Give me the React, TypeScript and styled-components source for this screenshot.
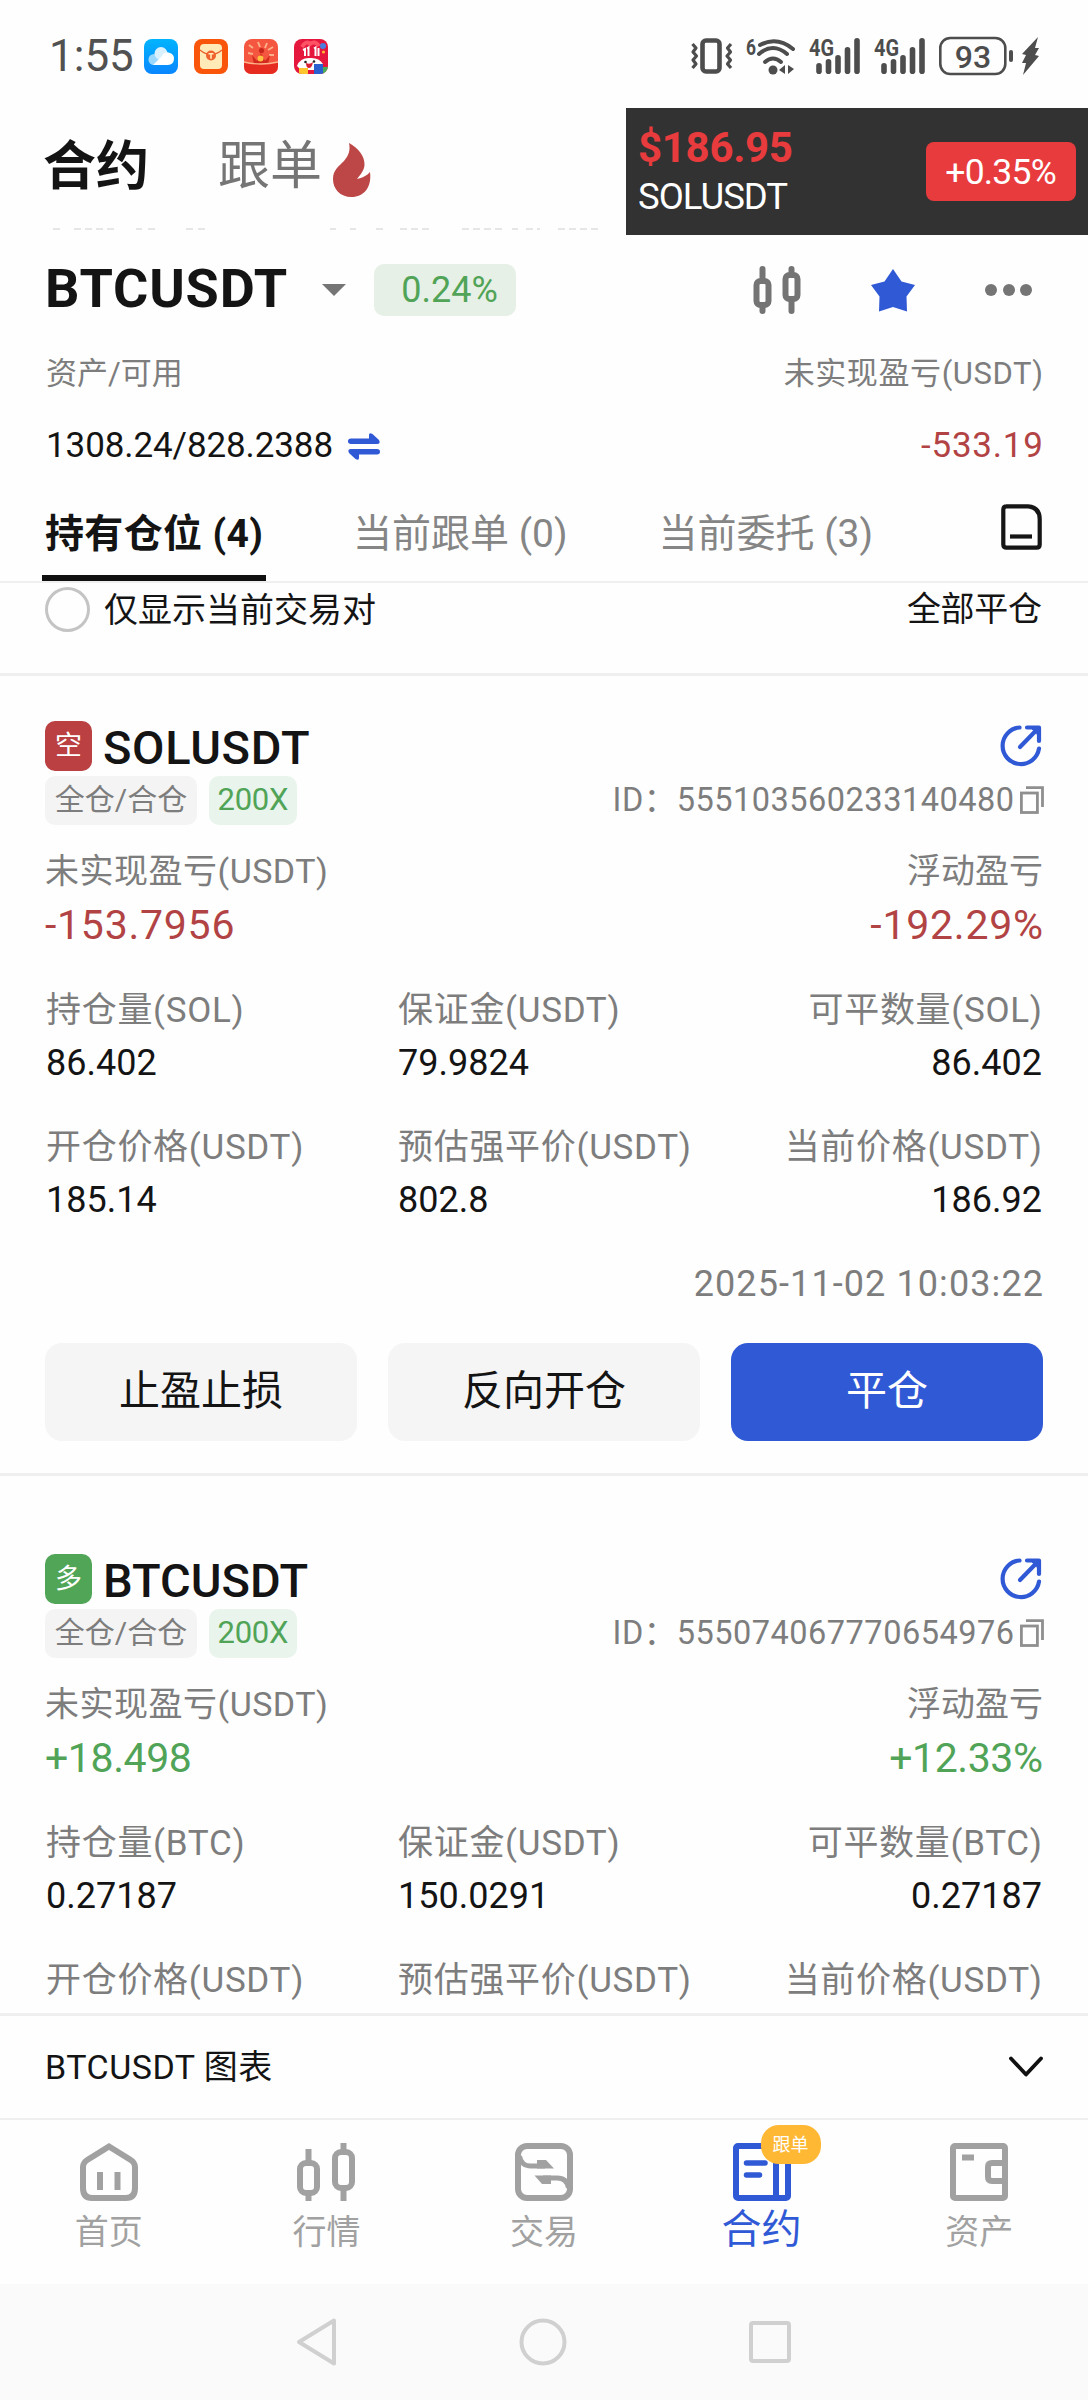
import React from "react";
import styled, { createGlobalStyle } from "styled-components";

const C = {
  ink: "#141414",
  gray: "#7d7d7d",
  navGray: "#a1a1a1",
  blue: "#3059d6",
  red: "#b24344",
  green: "#51a457",
  line: "#efefef",
};

const GlobalStyle = createGlobalStyle`
  * { box-sizing: border-box; }
  body { margin: 0; background: #fefefe; }
  svg { display: block; overflow: visible; flex: none; }
`;

const Screen = styled.div`
  width: 1088px;
  height: 2400px;
  overflow: hidden;
  display: flex;
  flex-direction: column;
  background: #fefefe;
  color: ${C.ink};
  font-family: Roboto, "Noto Sans CJK SC", sans-serif;
`;

type TextProps = {
  $size: number;
  $lh?: number;
  $color?: string;
  $weight?: number;
  $ls?: number;
};

const Text = styled.span<TextProps>`
  display: block;
  white-space: nowrap;
  font-size: ${(p) => p.$size}px;
  line-height: ${(p) => p.$lh ?? 40}px;
  color: ${(p) => p.$color ?? C.ink};
  font-weight: ${(p) => p.$weight ?? 400};
  letter-spacing: ${(p) => p.$ls ?? 0}px;
  margin-right: ${(p) => -(p.$ls ?? 0)}px;
`;

/* ---------- status bar ---------- */

const StatusBar = styled.div`
  height: 108px;
  flex: none;
  padding: 4px 49px 0 49px;
  display: flex;
  align-items: center;
  justify-content: space-between;
`;

const AppIcons = styled.div`
  display: flex;
  align-items: center;
  gap: 16px;
  margin-left: 10px;
`;

const Group = styled.div<{ $gap?: number }>`
  display: flex;
  align-items: center;
  gap: ${(p) => p.$gap ?? 0}px;
`;

const CloudApp = () => (
  <svg width="34" height="35" viewBox="0 0 34 35">
    <defs>
      <linearGradient id="cl" x1="0" y1="0" x2="0" y2="1">
        <stop offset="0" stopColor="#00b4ff" />
        <stop offset="1" stopColor="#0a86ff" />
      </linearGradient>
    </defs>
    <rect width="34" height="35" rx="8" fill="url(#cl)" />
    <circle cx="10" cy="20.5" r="5.5" fill="#9bd8ff" />
    <circle cx="17" cy="14.5" r="6.5" fill="#d9f1ff" />
    <path d="M9 26 L18 17 A6.3 6.3 0 1 1 24 26 Z" fill="#fff" />
  </svg>
);

const EnvelopeApp = () => (
  <svg width="34" height="35" viewBox="0 0 34 35">
    <rect width="34" height="35" rx="8" fill="#f9560b" />
    <rect x="6" y="5" width="22" height="25" rx="4" fill="#ffeab8" />
    <path d="M6 11 Q17 20 28 11" fill="none" stroke="#e8602a" strokeWidth="1.4" />
    <circle cx="17" cy="16.5" r="5" fill="#f0622d" />
    <path d="M14.5 14.8h5M17 14.8v5" stroke="#ffeab8" strokeWidth="1.6" />
  </svg>
);

const GiftApp = () => (
  <svg width="34" height="35" viewBox="0 0 34 35">
    <rect width="34" height="35" rx="8" fill="#f4563f" />
    <path d="M5 6l4 3M14 3l2 5M23 4l-2 5M29 8l-5 3M4 14l5 1M30 16l-5 0" stroke="#fcb089" strokeWidth="2" />
    <path d="M8 16l5 6 4-8 4 8 5-6-2 9H10z" fill="#d3281e" />
    <circle cx="17.5" cy="11.5" r="2.6" fill="#c9261c" />
    <circle cx="16.5" cy="19.5" r="3" fill="#ffc043" />
    <path d="M0 23q17 4 34 0v4q0 8-8 8H8q-8 0-8-8z" fill="#e62b20" />
    <path d="M0 23q17 4 34 0" fill="none" stroke="#ffb48c" strokeWidth="1.4" />
  </svg>
);

const SaleApp = () => (
  <svg width="34" height="35" viewBox="0 0 34 35">
    <defs>
      <clipPath id="sale">
        <rect width="34" height="35" rx="8" />
      </clipPath>
    </defs>
    <g clipPath="url(#sale)">
      <rect width="34" height="35" fill="#e5173c" />
      <path d="M8 8q4-7 8-3 5-4 9 2" fill="none" stroke="#ff5265" strokeWidth="4" />
      <path d="M9 11l2-1v7M13 9.500l1.500-1v8.500M20 9.500l1.500-1v8.500M24.500 9v8" stroke="#fff" strokeWidth="2" fill="none" />
      <circle cx="29" cy="7" r="3" fill="#4a7fe0" />
      <circle cx="29.500" cy="13" r="1.600" fill="#ffb52e" />
      <path d="M3 27q3-8 12-8 10-1 14 6l-3 6H7z" fill="#fff" />
      <circle cx="11.500" cy="23" r="1.300" fill="#222" />
      <circle cx="20" cy="22.500" r="1.300" fill="#222" />
      <path d="M12 24q4 2 7-1-1 6-4 6t-3-5z" fill="#d81f34" />
      <path d="M5 29h9v6H5z" fill="#ffc52e" />
      <path d="M20 25h9v10h-9z" fill="#2b5fd0" />
      <path d="M29 28h5v7h-5z" fill="#49ad57" />
    </g>
  </svg>
);

const S = "#4d4d4d";

const VibrateIcon = () => (
  <svg width="43" height="36" viewBox="0 0 43 36" fill="none" stroke={S}>
    <rect x="12.500" y="2.500" width="17" height="31" rx="3.500" strokeWidth="4.600" />
    <path d="M2.500 6l3.500 4-3 4 3.500 4-3.500 4 3 4-3.500 4" strokeWidth="3.200" strokeLinejoin="round" />
    <path d="M41 6l-3.500 4 3 4-3.500 4 3.500 4-3 4 3.500 4" strokeWidth="3.200" strokeLinejoin="round" />
  </svg>
);

const WifiIcon = () => (
  <svg width="50" height="38" viewBox="0 0 50 38" fill="none" stroke={S} strokeWidth="4" strokeLinecap="round">
    <text x="0" y="18" fontFamily="Roboto" fontWeight="700" fontSize="22" fill={S} stroke="none" textLength="10" lengthAdjust="spacingAndGlyphs">6</text>
    <path d="M14 8q17-9 33 4" />
    <path d="M13 17q14-12 28 0" />
    <path d="M19 25q8-7 16 0" />
    <circle cx="27" cy="33" r="4.500" fill={S} stroke="none" />
    <path d="M33 33l6-5v9zM42 28l6 4-6 5zM40 28v9" fill={S} stroke="none" />
  </svg>
);

const SignalIcon = () => (
  <svg width="52" height="38" viewBox="0 0 52 38">
    <text x="0" y="19" fontFamily="Roboto" fontWeight="700" fontSize="23" fill={S} textLength="25" lengthAdjust="spacingAndGlyphs">4G</text>
    {[[10, 11], [19.500, 15], [29, 19], [38.500, 27], [48, 36]].map(([x, h], i) => (
      <rect key={i} x={x - 2.800} y={37 - h} width="5.600" height={h} rx="2.800" fill={S} />
    ))}
  </svg>
);

const BatteryIcon = () => (
  <svg width="75" height="40" viewBox="0 0 75 40">
    <rect x="1.300" y="2" width="65" height="36" rx="10" fill="none" stroke={S} strokeWidth="2.600" />
    <rect x="70" y="14" width="4" height="12" rx="2" fill={S} />
    <text x="34" y="31.500" textAnchor="middle" fontFamily="Roboto" fontWeight="500" fontSize="32" fill={S}>93</text>
  </svg>
);

const BoltIcon = () => (
  <svg width="17" height="40" viewBox="0 0 17 40">
    <path d="M16 1L0 18l4 1-4 8 4 0-3 12L17 20l-4-1 4-7-4 0z" fill={S} />
  </svg>
);

/* ---------- top tabs and price ticker ---------- */

const TopBar = styled.div`
  height: 127px;
  flex: none;
  display: flex;
  justify-content: space-between;
`;

const TopTabs = styled.div`
  display: flex;
  align-items: flex-start;
  padding: 29px 0 0 43px;
`;

const TopTab = styled(Text)`
  margin-right: 69px;
`;

const FlameWrap = styled.div`
  margin-top: 5px;
`;

const Ticker = styled.div`
  width: 462px;
  height: 127px;
  background: #323232;
  display: flex;
  align-items: center;
  justify-content: space-between;
  padding: 0 12px 0 12px;
`;

const TickerInfo = styled.div`
  display: flex;
  flex-direction: column;
  padding-top: 3px;
`;

const TickerBadge = styled.div`
  width: 150px;
  height: 59px;
  border-radius: 8px;
  background: #e83b3d;
  display: flex;
  align-items: center;
  justify-content: center;
`;

const ClippedLine = styled.div`
  height: 3px;
  flex: none;
  margin: -7px 0 4px;
  padding-left: 50px;
`;

/* ---------- pair header ---------- */

const PairRow = styled.div`
  height: 106px;
  flex: none;
  padding: 1px 56px 0 45px;
  display: flex;
  align-items: center;
  justify-content: space-between;
`;

const Triangle = styled.i`
  border: 12px solid transparent;
  border-top-color: #757575;
  border-bottom: 0;
  margin: 2px 28px 0 35px;
`;

const ChangePill = styled.div`
  width: 142px;
  height: 52px;
  margin-top: 3px;
  border-radius: 10px;
  background: #e6f0e6;
  padding-left: 27px;
  display: flex;
  align-items: center;
`;

const PairActions = styled.div`
  display: flex;
  align-items: center;
  gap: 70px;
  padding-top: 3px;
`;

const Dots = styled.div`
  display: flex;
  gap: 5.5px;
  i {
    width: 12px;
    height: 12px;
    border-radius: 50%;
    background: #757575;
  }
`;

const SplitRow = styled.div<{ $h: number; $mt?: number; $left?: number }>`
  height: ${(p) => p.$h}px;
  margin-top: ${(p) => p.$mt ?? 0}px;
  padding: 0 45px 0 ${(p) => p.$left ?? 46}px;
  flex: none;
  display: flex;
  align-items: center;
  justify-content: space-between;
`;

/* ---------- position tabs ---------- */

const PositionTabs = styled.div`
  height: 94px;
  margin-top: 23px;
  padding: 0 46px 0 42px;
  border-bottom: 2px solid ${C.line};
  display: flex;
  flex: none;
`;

const PositionTab = styled.div<{ $active?: boolean; $gap?: number }>`
  height: 92px;
  width: ${(p) => (p.$active ? "224px" : "auto")};
  padding: 20px 0 0 ${(p) => (p.$active ? 3 : 0)}px;
  margin-right: ${(p) => p.$gap ?? 0}px;
  border-bottom: ${(p) => (p.$active ? "6px solid #101010" : "0")};
`;

const DocWrap = styled.div`
  margin: 15px 0 0 auto;
`;

/* ---------- scrolled positions ---------- */

const Scroll = styled.div`
  height: 1430px;
  flex: none;
  overflow: hidden;
`;

const FilterRow = styled.div`
  height: 93px;
  padding: 4px 46px 0 45px;
  border-bottom: 3px solid ${C.line};
  display: flex;
  align-items: flex-start;
  justify-content: space-between;
`;

const Radio = styled.span`
  width: 45px;
  height: 45px;
  border-radius: 50%;
  border: 3px solid #c4c4c4;
`;

const Card = styled.section<{ $top: number }>`
  padding: ${(p) => p.$top}px 45px 32px;
  border-bottom: 3px solid ${C.line};
`;

const Line = styled.div<{ $h: number; $mt?: number }>`
  height: ${(p) => p.$h}px;
  margin-top: ${(p) => p.$mt ?? 0}px;
  display: flex;
  align-items: center;
  justify-content: space-between;
`;

const SideBadge = styled.div<{ $bg: string }>`
  width: 47px;
  height: 50px;
  border-radius: 10px;
  background: ${(p) => p.$bg};
  display: flex;
  align-items: center;
  justify-content: center;
`;

const Tag = styled.div<{ $bg: string; $w: number }>`
  width: ${(p) => p.$w}px;
  height: 49px;
  border-radius: 10px;
  padding-bottom: 1px;
  background: ${(p) => p.$bg};
  display: flex;
  align-items: center;
  justify-content: center;
`;

const OrderId = styled.div`
  display: flex;
  align-items: center;
  gap: 6px;
  padding-bottom: 2px;
  margin-right: -1px;
`;

const Grid = styled.div<{ $mt: number }>`
  margin-top: ${(p) => p.$mt}px;
  padding: 0 1px;
  display: grid;
  grid-template-columns: 352px 330px 1fr;
`;

const Cell = styled.div<{ $end?: boolean }>`
  display: flex;
  flex-direction: column;
  gap: 12px;
  align-items: ${(p) => (p.$end ? "flex-end" : "flex-start")};
`;

const Buttons = styled.div`
  margin-top: 39px;
  display: grid;
  grid-template-columns: repeat(3, 312px);
  justify-content: space-between;
`;

const Button = styled.button<{ $primary?: boolean }>`
  height: 98px;
  border: 0;
  border-radius: 17px;
  padding: 0 0 3px;
  font: 400 41px/50px Roboto, "Noto Sans CJK SC", sans-serif;
  background: ${(p) => (p.$primary ? C.blue : "#f5f5f5")};
  color: ${(p) => (p.$primary ? "#fff" : C.ink)};
`;

/* ---------- bottom ---------- */

const ChartRow = styled.div`
  height: 107px;
  flex: none;
  border-top: 3px solid ${C.line};
  border-bottom: 2px solid ${C.line};
  padding: 0 45px;
  display: flex;
  align-items: center;
  justify-content: space-between;
`;

const Nav = styled.nav`
  height: 164px;
  flex: none;
  display: grid;
  grid-template-columns: repeat(5, 1fr);
`;

const NavItem = styled.div`
  display: flex;
  flex-direction: column;
  align-items: center;
  padding-top: 23px;
`;

const NavIcon = styled.div`
  position: relative;
  height: 58px;
`;

const NavBadge = styled.div`
  position: absolute;
  left: 28px;
  top: -18px;
  width: 60px;
  height: 39px;
  border-radius: 18px;
  background: #ffb834;
  display: flex;
  align-items: center;
  justify-content: center;
`;

const SystemBar = styled.div`
  height: 116px;
  flex: none;
  background: #fafafa;
  padding: 0 296px 1px 296px;
  display: flex;
  align-items: center;
  justify-content: space-between;
`;

/* ---------- icons ---------- */

const Flame = () => (
  <svg width="38" height="54" viewBox="0 0 38 54">
    <path d="M16 0C25 5 32 13 31.500 22C31 28 27 32 24 36C29 35 35 32 37 29C39 44 31 54 18.500 54C7 54 0 46 0 36C0 27 6 23 11 18C16 12 17.500 7 16 0z" fill="#bd4646" />
  </svg>
);

const Candles = () => (
  <svg width="48" height="48" viewBox="0 0 48 48" fill="none" stroke="#747474" strokeWidth="6">
    <path d="M9.500 3v9M9.500 41v4M38.500 3v4M38.500 35v10" strokeLinecap="round" />
    <rect x="3.500" y="15" width="12" height="24" rx="4" />
    <rect x="32.500" y="9" width="12" height="24" rx="4" />
  </svg>
);

const Star = () => (
  <svg width="44" height="43" viewBox="0 0 44 43">
    <path d="M22 0L30.500 12.500 44 16 35.500 27.500 36 42.500 22 38 8 42.500 8.500 27.500 0 16 13.500 12.500z" fill={C.blue} />
  </svg>
);

const Swap = () => (
  <svg width="32" height="27" viewBox="0 0 32 27" fill={C.blue}>
    <path d="M3 5.500H21V2q0-3 3.500-1L31 7q2 4-2 4H3q-3 0-3-2.700T3 5.500z" />
    <path d="M29 21.500H11V25q0 3-3.500 1L1 20q-2-4 2-4h26q3 0 3 2.700t-3 2.800z" />
  </svg>
);

const Doc = () => (
  <svg width="41" height="46" viewBox="0 0 41 46" fill="none" stroke="#161616" strokeWidth="4.200">
    <path d="M5 2.300H27Q38.500 3 38.700 15V40.500Q38.700 43.700 35.500 43.700H5.500Q2.300 43.700 2.300 40.500V5.500Q2.300 2.300 5.500 2.300z" />
    <path d="M9 32.500H31" />
  </svg>
);

const Share = () => (
  <svg width="43" height="42" viewBox="0 0 43 42" fill="none" stroke={C.blue} strokeWidth="4.200" strokeLinecap="round" strokeLinejoin="round">
    <path d="M19.500 2.500A18.300 18.300 0 1 0 39 23.500" />
    <path d="M20 22L38.500 3M27 2.500H39V16" />
    <path d="M31 2.500H39V11z" fill={C.blue} strokeWidth="1" />
  </svg>
);

const Copy = () => (
  <svg width="24" height="28" viewBox="0 0 24 28" fill="none" stroke="#8f8f8f" strokeWidth="2.800">
    <rect x="1.400" y="7" width="16" height="19.500" />
    <path d="M6 1.600H22.500V21" />
  </svg>
);

const Chevron = () => (
  <svg width="34" height="22" viewBox="0 0 34 22" fill="none" stroke="#101010" strokeWidth="3.800" strokeLinecap="round" strokeLinejoin="round">
    <path d="M2 2.500L17 18.500 32 2.500" />
  </svg>
);

const navSvg = { width: 58, height: 58, viewBox: "0 0 58 58", fill: "none", strokeWidth: 6 };

const HomeIcon = () => (
  <svg {...navSvg} stroke={C.navGray}>
    <path d="M29 3.500L50 16.500Q55 19.500 55 24V45Q55 55 46 55H12Q3 55 3 45V24Q3 19.500 8 16.500z" />
    <path d="M20 29V47M37.500 29V47" />
  </svg>
);

const MarketIcon = () => (
  <svg {...navSvg} stroke={C.navGray}>
    <path d="M11.500 6V18M11.500 52V58M46.500 0V8M46.500 46V58" />
    <rect x="3" y="20" width="17" height="30" rx="6" />
    <rect x="38" y="9" width="17" height="36" rx="6" />
  </svg>
);

const TradeIcon = () => (
  <svg {...navSvg} stroke={C.navGray}>
    <rect x="3" y="3" width="52" height="52" rx="9" />
    <path d="M4.500 13Q6 23 16 23H30M53.500 45Q52 35 42 35H28" strokeWidth="5" />
    <path d="M22 17H31L39 25.500H22zM36 41H27L19.500 32.500H36z" fill={C.navGray} stroke="none" />
  </svg>
);

const ContractIcon = () => (
  <svg {...navSvg} stroke={C.blue}>
    <rect x="3" y="3" width="52" height="52" rx="2" />
    <path d="M43 3V55" />
    <path d="M13.500 20H32M13.500 32H26.500" strokeLinecap="round" strokeWidth="5.500" />
  </svg>
);

const AssetIcon = () => (
  <svg {...navSvg} stroke={C.navGray}>
    <rect x="3" y="3" width="52" height="52" rx="2" />
    <path d="M55 20H42Q38 20 38 24V34Q38 38 42 38H55" />
    <path d="M12 14.500H24" />
  </svg>
);

/* ---------- data ---------- */

type Position = {
  side: string;
  sideColor: string;
  name: string;
  nameSpacing: number;
  id: string;
  pnl: string;
  rate: string;
  pnlColor: string;
  pnlSpacing: number;
  coin: string;
  amount: string;
  margin: string;
  open: string;
  liq: string;
  price: string;
  time: string;
};

const positions: Position[] = [
  {
    side: "空", sideColor: "#ba4042", name: "SOLUSDT", nameSpacing: 0.65, id: "555103560233140480",
    pnl: "-153.7956", rate: "-192.29%", pnlColor: C.red, pnlSpacing: 0.75, coin: "SOL",
    amount: "86.402", margin: "79.9824", open: "185.14", liq: "802.8", price: "186.92",
    time: "2025-11-02 10:03:22",
  },
  {
    side: "多", sideColor: "#50a557", name: "BTCUSDT", nameSpacing: 0, id: "555074067770654976",
    pnl: "+18.498", rate: "+12.33%", pnlColor: C.green, pnlSpacing: -0.4, coin: "BTC",
    amount: "0.27187", margin: "150.0291", open: "", liq: "", price: "", time: "",
  },
];

const Field = ({ label, value, end }: { label: string; value: string; end?: boolean }) => (
  <Cell $end={end}>
    <Text $size={35} $color={C.gray} $ls={0.7}>{label}</Text>
    <Text $size={36}>{value}</Text>
  </Cell>
);

const PositionCard = ({ p, top }: { p: Position; top: number }) => (
  <Card $top={top}>
    <Line $h={50}>
      <Group $gap={11}>
        <SideBadge $bg={p.sideColor}>
          <Text $size={27} $color="#fff">{p.side}</Text>
        </SideBadge>
        <Line $h={50} $mt={4}>
          <Text $size={47} $weight={500} $lh={50} $ls={p.nameSpacing}>{p.name}</Text>
        </Line>
      </Group>
      <Share />
    </Line>
    <Line $h={49} $mt={5}>
      <Group $gap={12}>
        <Tag $bg="#f4f4f4" $w={152}>
          <Text $size={30} $color={C.gray}>全仓/合仓</Text>
        </Tag>
        <Tag $bg="#e8f4ec" $w={88}>
          <Text $size={31} $color={C.green} $ls={-0.3}>200X</Text>
        </Tag>
      </Group>
      <OrderId>
        <Text $size={32.5} $color={C.gray} $ls={0.5}>ID：{p.id}</Text>
        <Copy />
      </OrderId>
    </Line>
    <Line $h={40} $mt={26}>
      <Text $size={34} $color={C.gray} $ls={0.5}>未实现盈亏(USDT)</Text>
      <Text $size={34} $color={C.gray}>浮动盈亏</Text>
    </Line>
    <Line $h={50} $mt={9}>
      <Text $size={41} $color={p.pnlColor} $ls={p.pnlSpacing}>{p.pnl}</Text>
      <Text $size={41} $color={p.pnlColor} $ls={p.pnlSpacing}>{p.rate}</Text>
    </Line>
    <Grid $mt={41}>
      <Field label={`持仓量(${p.coin})`} value={p.amount} />
      <Field label="保证金(USDT)" value={p.margin} />
      <Field label={`可平数量(${p.coin})`} value={p.amount} end />
    </Grid>
    <Grid $mt={45}>
      <Field label="开仓价格(USDT)" value={p.open} />
      <Field label="预估强平价(USDT)" value={p.liq} />
      <Field label="当前价格(USDT)" value={p.price} end />
    </Grid>
    {p.time && (
      <>
        <Line $h={40} $mt={44}>
          <span />
          <Text $size={36} $color={C.gray} $ls={1.1}>{p.time}</Text>
        </Line>
        <Buttons>
          <Button>止盈止损</Button>
          <Button>反向开仓</Button>
          <Button $primary>平仓</Button>
        </Buttons>
      </>
    )}
  </Card>
);

const navItems = [
  { label: "首页", icon: <HomeIcon /> },
  { label: "行情", icon: <MarketIcon /> },
  { label: "交易", icon: <TradeIcon /> },
  { label: "合约", icon: <ContractIcon />, active: true },
  { label: "资产", icon: <AssetIcon /> },
];

export default function App() {
  return (
    <Screen>
      <GlobalStyle />
      <StatusBar>
        <Group>
          <Text $size={44} $lh={50} $color="#515151">1:55</Text>
          <AppIcons>
            <CloudApp />
            <EnvelopeApp />
            <GiftApp />
            <SaleApp />
          </AppIcons>
        </Group>
        <Group $gap={13}>
          <VibrateIcon />
          <WifiIcon />
          <SignalIcon />
          <SignalIcon />
          <Group $gap={8}>
            <BatteryIcon />
            <BoltIcon />
          </Group>
        </Group>
      </StatusBar>

      <TopBar>
        <TopTabs>
          <TopTab $size={53} $lh={60} $weight={700}>合约</TopTab>
          <Group $gap={11}>
            <Text $size={52} $lh={60} $color="#757575">跟单</Text>
            <FlameWrap><Flame /></FlameWrap>
          </Group>
        </TopTabs>
        <Ticker>
          <TickerInfo>
            <Text $size={42} $lh={48} $weight={700} $color="#e83b3d" $ls={-0.3}>$186.95</Text>
            <Text $size={36.5} $lh={50} $color="#fff" $ls={-1}>SOLUSDT</Text>
          </TickerInfo>
          <TickerBadge>
            <Text $size={35.5} $color="#fff" $ls={-0.8}>+0.35%</Text>
          </TickerBadge>
        </Ticker>
      </TopBar>
      <ClippedLine>
        <svg width="570" height="2" viewBox="0 0 570 2">
          <path
            d="M3 1h8M24 1h42M86 1h6M98 1h8M136 1h8M148 1h8M280 1h6M300 1h6M326 1h8M350 1h32M412 1h42M462 1h6M476 1h14M508 1h40"
            stroke="#dedede" strokeWidth="1.500" strokeDasharray="7 4"
          />
        </svg>
      </ClippedLine>

      <PairRow>
        <Group>
          <Text $size={54} $lh={60} $weight={700} $ls={0.8}>BTCUSDT</Text>
          <Triangle />
          <ChangePill>
            <Text $size={36} $color={C.green}>0.24%</Text>
          </ChangePill>
        </Group>
        <PairActions>
          <Candles />
          <Star />
          <Dots><i /><i /><i /></Dots>
        </PairActions>
      </PairRow>

      <SplitRow $h={40} $mt={13}>
        <Text $size={31} $color={C.gray}>资产/可用</Text>
        <Text $size={31} $color={C.gray} $ls={0.6}>未实现盈亏(USDT)</Text>
      </SplitRow>
      <SplitRow $h={40} $mt={32}>
        <Group $gap={15}>
          <Text $size={35} $ls={-0.1}>1308.24/828.2388</Text>
          <Swap />
        </Group>
        <Text $size={35} $color={C.red} $ls={0.8}>-533.19</Text>
      </SplitRow>

      <PositionTabs>
        <PositionTab $active $gap={87}>
          <Text $size={39} $lh={50} $weight={700} $ls={0.35}>持有仓位 (4)</Text>
        </PositionTab>
        <PositionTab $gap={91}>
          <Text $size={39} $lh={50} $color="#858585">当前跟单 (0)</Text>
        </PositionTab>
        <PositionTab>
          <Text $size={39} $lh={50} $color="#858585">当前委托 (3)</Text>
        </PositionTab>
        <DocWrap><Doc /></DocWrap>
      </PositionTabs>

      <Scroll>
        <FilterRow>
          <Group $gap={14}>
            <Radio />
            <Text $size={34}>仅显示当前交易对</Text>
          </Group>
          <Text $size={34} $lh={45} $ls={-0.3}>全部平仓</Text>
        </FilterRow>
        <PositionCard p={positions[0]} top={45} />
        <PositionCard p={positions[1]} top={78} />
      </Scroll>

      <ChartRow>
        <Text $size={34} $ls={0.5}>BTCUSDT 图表</Text>
        <Chevron />
      </ChartRow>

      <Nav>
        {navItems.map((n) => (
          <NavItem key={n.label}>
            <NavIcon>
              {n.icon}
              {n.active && (
                <NavBadge>
                  <Text $size={18} $lh={24} $color="#fff">跟单</Text>
                </NavBadge>
              )}
            </NavIcon>
            <Text $size={n.active ? 40 : 34} $lh={n.active ? 57 : 63} $color={n.active ? C.blue : C.navGray}>
              {n.label}
            </Text>
          </NavItem>
        ))}
      </Nav>

      <SystemBar>
        <svg width="42" height="50" viewBox="0 0 42 50" fill="none" stroke="#d0d0d0" strokeWidth="4" strokeLinejoin="round">
          <path d="M3 25L38 3.500V46.500z" />
        </svg>
        <svg width="48" height="48" viewBox="0 0 48 48" fill="none" stroke="#d0d0d0" strokeWidth="4">
          <circle cx="24" cy="24" r="21.500" />
        </svg>
        <svg width="44" height="44" viewBox="0 0 44 44" fill="none" stroke="#d0d0d0" strokeWidth="4">
          <rect x="3" y="3" width="38" height="38" rx="2" />
        </svg>
      </SystemBar>
    </Screen>
  );
}
